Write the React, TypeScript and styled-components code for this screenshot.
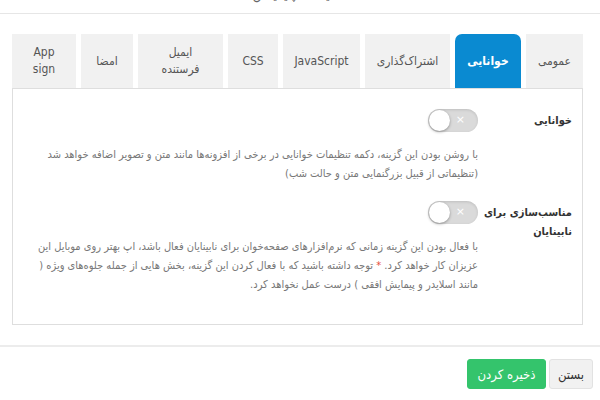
import React from "react";
import styled, { createGlobalStyle } from "styled-components";

const Global = createGlobalStyle`
  html, body { margin: 0; padding: 0; background: #fff; }
  body {
    width: 600px;
    height: 400px;
    overflow: hidden;
    font-family: "DejaVu Sans Condensed", "DejaVu Sans", sans-serif;
  }
`;

const Page = styled.div`
  direction: rtl;
  width: 600px;
  height: 400px;
  display: flex;
  flex-direction: column;
  background: #fff;
`;

const Header = styled.div`
  height: 13px;
  flex: none;
  border-bottom: 1px solid #e6e6e6;
  display: flex;
  justify-content: center;
  align-items: flex-end;
  overflow: hidden;
`;

const Title = styled.div`
  font-size: 14px;
  line-height: 14px;
  color: #666;
  margin-bottom: 12px;
`;

const Body = styled.div`
  padding: 20px 17px 0 12px;
  display: flex;
  flex-direction: column;
`;

const TabList = styled.div`
  display: flex;
  gap: 5px;
  height: 54px;
`;

const Tab = styled.div<{ $w: number; $active?: boolean }>`
  flex: none;
  width: ${(p) => p.$w}px;
  display: flex;
  align-items: center;
  justify-content: center;
  text-align: center;
  padding: 0 6px;
  box-sizing: border-box;
  background: ${(p) => (p.$active ? "#0a8ad1" : "#f1f1f1")};
  color: ${(p) => (p.$active ? "#fff" : "#555")};
  font-weight: ${(p) => (p.$active ? 700 : 400)};
  border-radius: ${(p) => (p.$active ? "7px 7px 0 0" : "0")};
  font-size: 12px;
  line-height: 17px;
`;

const Panel = styled.div`
  border: 1px solid #dedede;
  padding: 20px 0 30px 12px;
  display: flex;
  flex-direction: column;
  gap: 18px;
`;

const Row = styled.div`
  display: flex;
  align-items: flex-start;
`;

const Label = styled.div`
  flex: none;
  width: 104px;
  box-sizing: border-box;
  padding: 2px 10px 0 0;
  font-size: 11px;
  line-height: 19px;
  font-weight: 700;
  color: #333;
  white-space: nowrap;
`;

const Content = styled.div`
  flex: 1;
  display: flex;
  flex-direction: column;
  align-items: flex-start;
`;

const Switch = styled.div`
  position: relative;
  width: 50px;
  height: 23px;
  border-radius: 12px;
  background: #dadada;
  box-shadow: inset 0 1px 3px rgba(0, 0, 0, 0.12);
`;

const Knob = styled.span`
  position: absolute;
  left: 1px;
  top: 1px;
  width: 21px;
  height: 21px;
  border-radius: 50%;
  background: #fff;
  box-shadow: 0 1px 3px rgba(0, 0, 0, 0.35);
`;

const Cross = styled.span`
  position: absolute;
  right: 13px;
  top: 4px;
  font-size: 11px;
  line-height: 14px;
  color: #fff;
  font-family: "DejaVu Sans", sans-serif;
`;

const Desc = styled.p`
  margin: 13px 0 0;
  font-size: 11px;
  line-height: 19px;
  color: #777;
`;

const Star = styled.span`
  color: #e74c3c;
`;

const Footer = styled.div`
  margin-top: 20px;
  border-top: 2px solid #ececec;
  padding: 12px 7px 0 0;
  display: flex;
  gap: 3px;
`;

const Button = styled.button<{ $primary?: boolean; $w: number }>`
  width: ${(p) => p.$w}px;
  height: 30px;
  border-radius: 3px;
  border: 1px solid ${(p) => (p.$primary ? "#34c46c" : "#e2e2e2")};
  background: ${(p) => (p.$primary ? "#34c46c" : "#f1f1f1")};
  color: ${(p) => (p.$primary ? "#fff" : "#333")};
  font-family: "DejaVu Sans Condensed", "DejaVu Sans", sans-serif;
  font-size: 13px;
  padding: 0;
`;

const tabs: { label: React.ReactNode; w: number; active?: boolean }[] = [
  { label: "عمومی", w: 57 },
  { label: "خوانایی", w: 66, active: true },
  { label: "اشتراک‌گذاری", w: 85 },
  { label: "JavaScript", w: 77 },
  { label: "CSS", w: 50 },
  { label: <>ایمیل<br />فرستنده</>, w: 85 },
  { label: "امضا", w: 52 },
  { label: <>App<br />sign</>, w: 64 },
];

function Toggle() {
  return (
    <Switch>
      <Cross>×</Cross>
      <Knob />
    </Switch>
  );
}

export default function App() {
  return (
    <Page>
      <Global />
      <Header>
        <Title>تنظیمات اپلیکیشن</Title>
      </Header>
      <Body>
        <TabList>
          {tabs.map((t, i) => (
            <Tab key={i} $w={t.w} $active={t.active}>
              {t.label}
            </Tab>
          ))}
        </TabList>
        <Panel>
          <Row>
            <Label>خوانایی</Label>
            <Content>
              <Toggle />
              <Desc>
                با روشن بودن این گزینه، دکمه تنظیمات خوانایی در برخی از افزونه‌ها مانند متن و تصویر اضافه خواهد شد
                <br />
                (تنظیماتی از قبیل بزرگنمایی متن و حالت شب)
              </Desc>
            </Content>
          </Row>
          <Row>
            <Label>
              مناسب‌سازی برای
              <br />
              نابینایان
            </Label>
            <Content>
              <Toggle />
              <Desc>
                با فعال بودن این گزینه زمانی که نرم‌افزارهای صفحه‌خوان برای نابینایان فعال باشد، اپ بهتر روی موبایل این
                <br />
                عزیزان کار خواهد کرد. <Star>*</Star> توجه داشته باشید که با فعال کردن این گزینه، بخش هایی از جمله
                جلوه‌های ویژه (
                <br />
                مانند اسلایدر و پیمایش افقی ) درست عمل نخواهد کرد.
              </Desc>
            </Content>
          </Row>
        </Panel>
      </Body>
      <Footer>
        <Button $w={44}>بستن</Button>
        <Button $w={79} $primary>
          ذخیره کردن
        </Button>
      </Footer>
    </Page>
  );
}
